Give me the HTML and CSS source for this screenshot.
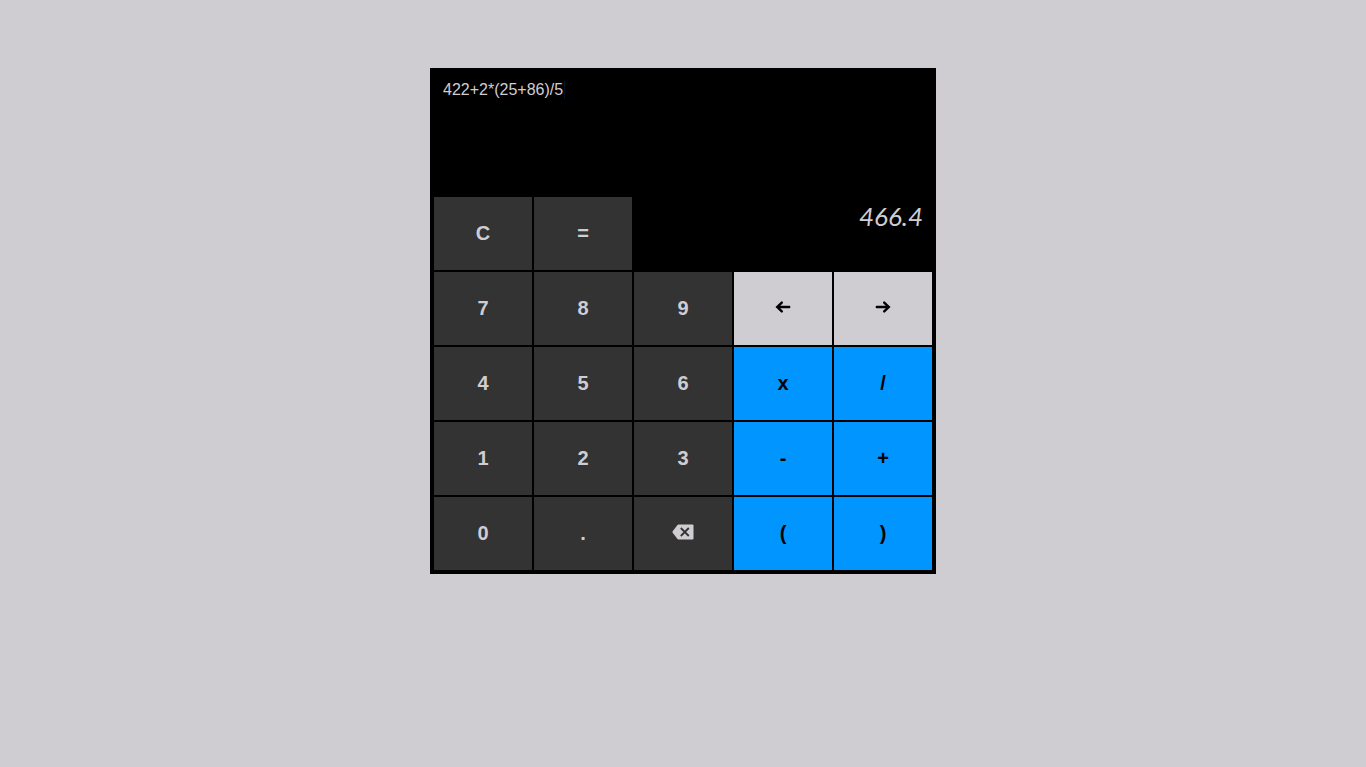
FILE: index.html
```html
<!DOCTYPE html>
<html lang="en">
<head>
  <meta charset="utf-8">
  <meta name="viewport" content="width=device-width, initial-scale=1">
  <title>Calculator</title>
  <link rel="stylesheet" href="styles.css">
</head>
<body>
  <main class="calculator">
    <div class="screen">
      <input class="expression" type="text" aria-label="Expression" value="422+2*(25+86)/5" spellcheck="false">
    </div>
    <button class="key" type="button">C</button>
    <button class="key" type="button">=</button>
    <output class="result" aria-label="Result">466.4</output>

    <button class="key" type="button">7</button>
    <button class="key" type="button">8</button>
    <button class="key" type="button">9</button>
    <button class="key key-move" type="button" aria-label="Move left">
      <svg class="icon-arrow" viewBox="0 0 16 14" aria-hidden="true"><path d="M14.2 7H2.2M6.8 2.6L2.2 7L6.8 11.4"/></svg>
    </button>
    <button class="key key-move" type="button" aria-label="Move right">
      <svg class="icon-arrow" viewBox="0 0 16 14" aria-hidden="true"><path d="M1.8 7H13.8M9.2 2.6L13.8 7L9.2 11.4"/></svg>
    </button>

    <button class="key" type="button">4</button>
    <button class="key" type="button">5</button>
    <button class="key" type="button">6</button>
    <button class="key key-operator" type="button">x</button>
    <button class="key key-operator" type="button">/</button>

    <button class="key" type="button">1</button>
    <button class="key" type="button">2</button>
    <button class="key" type="button">3</button>
    <button class="key key-operator" type="button">-</button>
    <button class="key key-operator" type="button">+</button>

    <button class="key" type="button">0</button>
    <button class="key" type="button">.</button>
    <button class="key" type="button" aria-label="Backspace">
      <svg class="icon-backspace" viewBox="0 0 22 16" aria-hidden="true">
        <path class="icon-body" d="M6.6 .5H20.5Q21.5.5 21.5 1.5V14.5Q21.5 15.5 20.5 15.5H6.6Q5.8 15.5 5.1 14.6L.7 8.8Q.2 8 .7 7.2L5.1 1.4Q5.8.5 6.6 .5Z"/>
        <path class="icon-cross" d="M8.8 4L16.8 12M16.8 4L8.8 12"/>
      </svg>
    </button>
    <button class="key key-operator" type="button">(</button>
    <button class="key key-operator" type="button">)</button>
  </main>
</body>
</html>
```
FILE: styles.css
```css
* {
  box-sizing: border-box;
}

body {
  margin: 0;
  padding: 68px 16px;
  background: #d0cdd2;
  font-family: "Liberation Sans", Arial, sans-serif;
}

.calculator {
  display: grid;
  grid-template-columns: repeat(5, 1fr);
  gap: 2px;
  max-width: 506px;
  margin: 0 auto;
  padding: 4px;
  background: #000;
  color: #d0cdd2;
}

.screen {
  grid-column: 1 / -1;
  min-height: 123px;
  padding: 9px;
}

.expression {
  display: block;
  field-sizing: content;
  max-width: 100%;
  padding: 0 1px 0 0;
  border: 0;
  border-right: 1px solid #001525;
  outline: 0;
  background: transparent;
  color: inherit;
  font: 16px/18px "Liberation Sans", Arial, sans-serif;
}

.result {
  grid-column: 3 / -1;
  padding: 3px 9px;
  text-align: right;
  font: italic 26px/32px Lato, "Liberation Sans", sans-serif;
}

.key {
  display: flex;
  align-items: center;
  justify-content: center;
  min-height: 73px;
  padding: 0 0 2px;
  border: 0;
  border-radius: 0;
  background: #333;
  color: #d0cdd2;
  font: bold 20px/24px "Liberation Sans", Arial, sans-serif;
  cursor: pointer;
}

.key-move {
  background: #d0cdd2;
  color: #000;
}

.key-operator {
  background: #0095ff;
  color: #000;
}

.icon-arrow {
  width: 16px;
  height: 14px;
  margin-bottom: 1px;
  fill: none;
  stroke: currentColor;
  stroke-width: 2.4;
  stroke-linecap: round;
}

.icon-backspace {
  width: 22px;
  height: 16px;
  margin-bottom: 1px;
}

.icon-body {
  fill: #d0cdd2;
}

.icon-cross {
  fill: none;
  stroke: #333;
  stroke-width: 1.8;
}
```
